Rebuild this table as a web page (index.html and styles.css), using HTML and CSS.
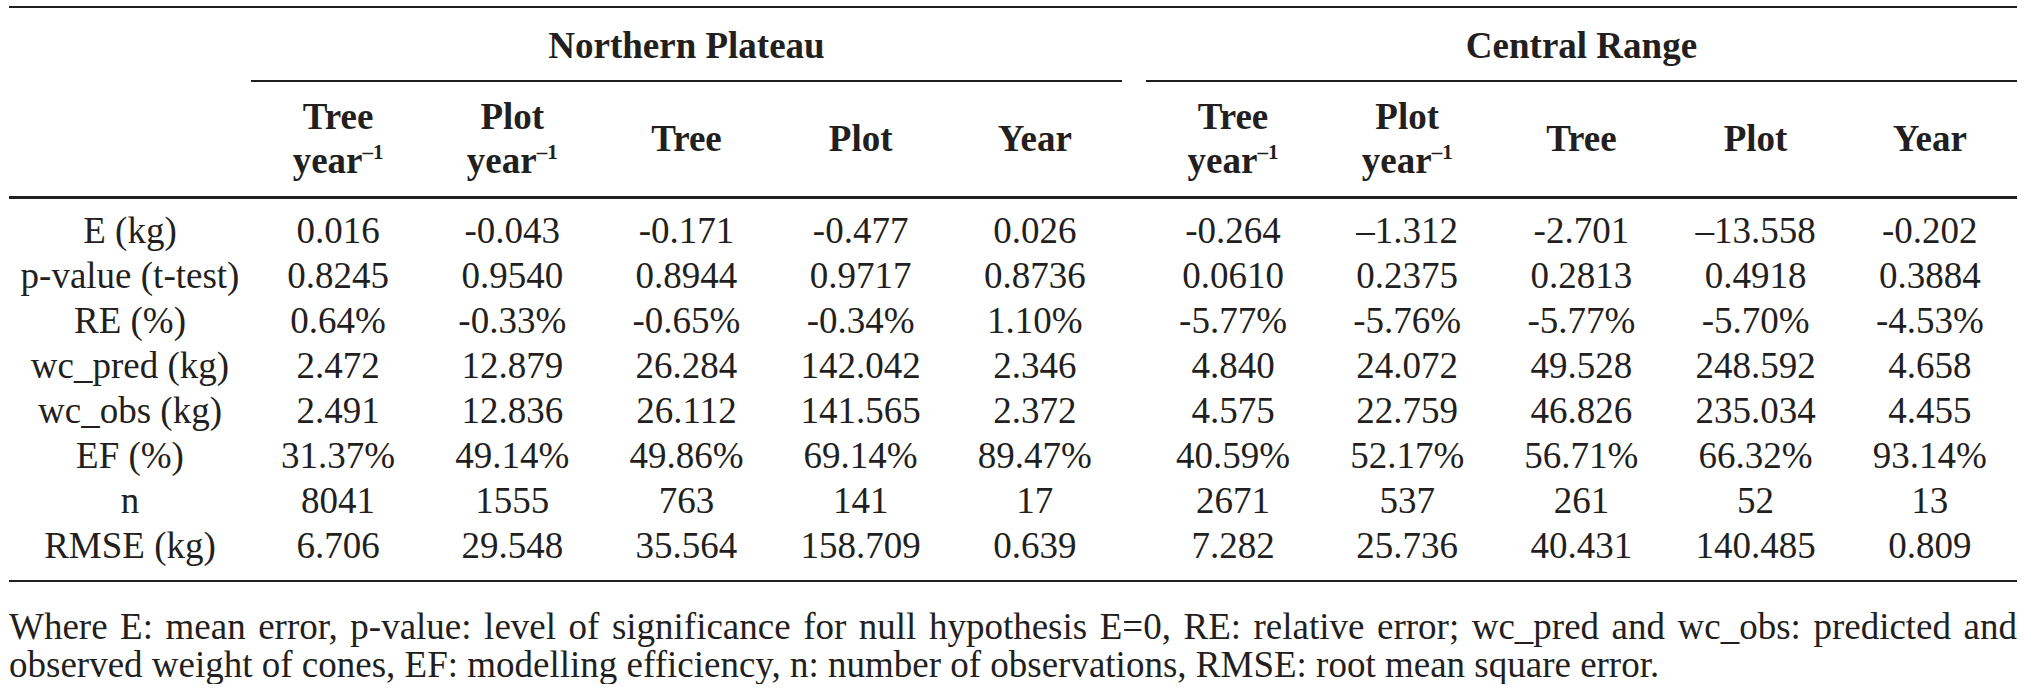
FILE: index.html
```html
<!DOCTYPE html>
<html lang="en">
<head>
<meta charset="utf-8">
<title>Model validation statistics</title>
<link rel="stylesheet" href="styles.css">
</head>
<body>
<div class="page">
  <table class="results">
    <colgroup>
      <col class="c-label">
      <col class="c-val"><col class="c-val"><col class="c-val"><col class="c-val"><col class="c-val">
      <col class="c-gap">
      <col class="c-val"><col class="c-val"><col class="c-val"><col class="c-val"><col class="c-val">
    </colgroup>
    <thead>
      <tr class="groups">
        <th></th>
        <th colspan="5" class="grp">Northern Plateau</th>
        <th class="gap"></th>
        <th colspan="5" class="grp">Central Range</th>
      </tr>
      <tr class="cols">
        <th></th>
        <th>Tree<br>year<sup>–1</sup></th>
        <th>Plot<br>year<sup>–1</sup></th>
        <th>Tree</th>
        <th>Plot</th>
        <th>Year</th>
        <th class="gap"></th>
        <th>Tree<br>year<sup>–1</sup></th>
        <th>Plot<br>year<sup>–1</sup></th>
        <th>Tree</th>
        <th>Plot</th>
        <th>Year</th>
      </tr>
    </thead>
    <tbody>
      <tr><td>E (kg)</td><td>0.016</td><td>-0.043</td><td>-0.171</td><td>-0.477</td><td>0.026</td><td class="gap"></td><td>-0.264</td><td>–1.312</td><td>-2.701</td><td>–13.558</td><td>-0.202</td></tr>
      <tr><td>p-value (t-test)</td><td>0.8245</td><td>0.9540</td><td>0.8944</td><td>0.9717</td><td>0.8736</td><td class="gap"></td><td>0.0610</td><td>0.2375</td><td>0.2813</td><td>0.4918</td><td>0.3884</td></tr>
      <tr><td>RE (%)</td><td>0.64%</td><td>-0.33%</td><td>-0.65%</td><td>-0.34%</td><td>1.10%</td><td class="gap"></td><td>-5.77%</td><td>-5.76%</td><td>-5.77%</td><td>-5.70%</td><td>-4.53%</td></tr>
      <tr><td>wc_pred (kg)</td><td>2.472</td><td>12.879</td><td>26.284</td><td>142.042</td><td>2.346</td><td class="gap"></td><td>4.840</td><td>24.072</td><td>49.528</td><td>248.592</td><td>4.658</td></tr>
      <tr><td>wc_obs (kg)</td><td>2.491</td><td>12.836</td><td>26.112</td><td>141.565</td><td>2.372</td><td class="gap"></td><td>4.575</td><td>22.759</td><td>46.826</td><td>235.034</td><td>4.455</td></tr>
      <tr><td>EF (%)</td><td>31.37%</td><td>49.14%</td><td>49.86%</td><td>69.14%</td><td>89.47%</td><td class="gap"></td><td>40.59%</td><td>52.17%</td><td>56.71%</td><td>66.32%</td><td>93.14%</td></tr>
      <tr><td>n</td><td>8041</td><td>1555</td><td>763</td><td>141</td><td>17</td><td class="gap"></td><td>2671</td><td>537</td><td>261</td><td>52</td><td>13</td></tr>
      <tr><td>RMSE (kg)</td><td>6.706</td><td>29.548</td><td>35.564</td><td>158.709</td><td>0.639</td><td class="gap"></td><td>7.282</td><td>25.736</td><td>40.431</td><td>140.485</td><td>0.809</td></tr>
    </tbody>
  </table>
  <p class="note">Where E: mean error, p-value: level of significance for null hypothesis E=0, RE: relative error; wc_pred and wc_obs: predicted and observed weight of cones, EF: modelling efficiency, n: number of observations, RMSE: root mean square error.</p>
</div>
</body>
</html>
```

FILE: styles.css
```css
html, body {
  margin: 0;
  padding: 0;
  background: #ffffff;
}

body {
  color: #231f20;
  font-family: "Liberation Serif", "Times New Roman", serif;
}

.page {
  width: 2008px;
  margin: 0 0 0 9px;
  padding-top: 6px;
}

.results {
  width: 2008px;
  table-layout: fixed;
  border-collapse: separate;
  border-spacing: 0;
  font-size: 37px;
}

.c-label { width: 242px; }
.c-gap { width: 24px; }

.results th,
.results td {
  padding: 0;
  text-align: center;
  vertical-align: middle;
  white-space: nowrap;
}

/* top rule */
.groups th {
  border-top: 2px solid #231f20;
  height: 70px;
  font-weight: bold;
}

.groups .grp {
  border-bottom: 2px solid #231f20;
  padding-top: 2px;
}

.groups th:not(.grp) {
  border-bottom: 2px solid transparent;
}

.cols th {
  height: 114px;
  font-weight: bold;
  line-height: 44px;
  border-bottom: 3px solid #231f20;
}

.cols th sup {
  font-size: 21px;
  line-height: 0;
  vertical-align: 14px;
}

.results tbody td {
  line-height: 45px;
  font-weight: normal;
}

.results tbody tr:first-child td {
  padding-top: 9px;
}

.results tbody tr:last-child td {
  padding-bottom: 12px;
  border-bottom: 2px solid #231f20;
}

.note {
  margin: 26px 0 0;
  font-size: 37px;
  line-height: 38px;
  text-align: justify;
}
```
